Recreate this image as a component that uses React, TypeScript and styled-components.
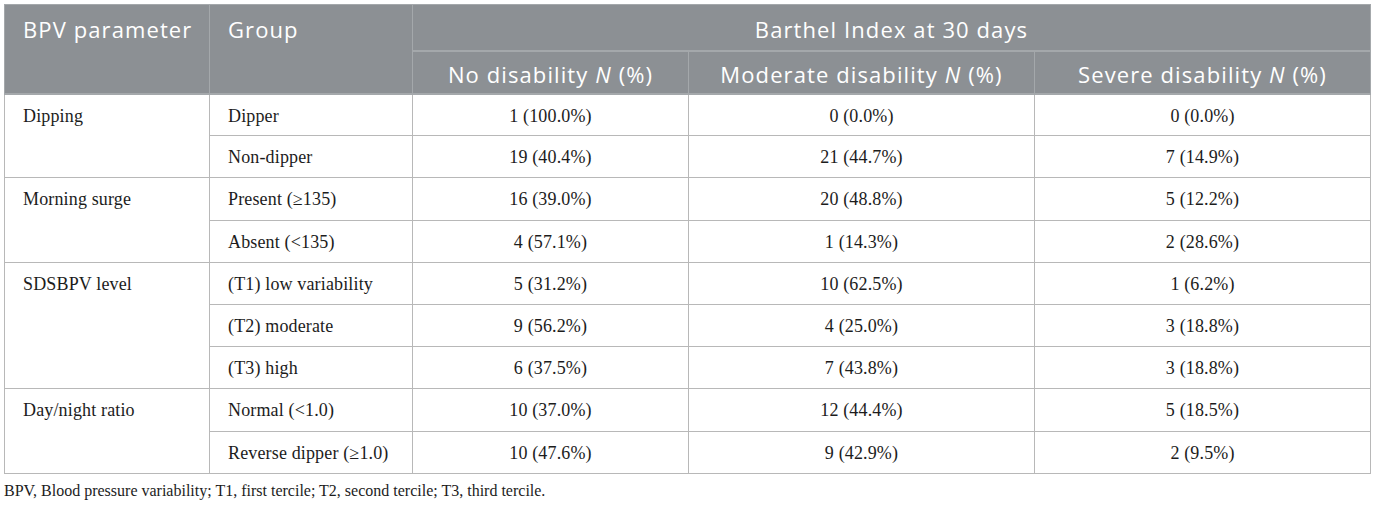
import React from "react";
import styled, { createGlobalStyle } from "styled-components";

const Global = createGlobalStyle`
  html, body { margin: 0; padding: 0; background: #ffffff; }
  body { font-family: "Liberation Serif", "Times New Roman", serif; }
`;

const Page = styled.div`
  padding: 4px 6px 0 4px;
  width: 1366px;
`;

const Table = styled.table`
  border-collapse: collapse;
  width: 1366px;
  table-layout: fixed;
  border: 1px solid #b0b0b0;
`;

const HeadCell = styled.th<{ $align?: "left" | "center"; $h: number }>`
  background: #8c9094;
  color: #ffffff;
  font-family: "Open Sans", "Lato", sans-serif;
  font-weight: 400;
  font-size: 22px;
  letter-spacing: 1.1px;
  line-height: 26px;
  text-align: ${(p) => p.$align ?? "center"};
  vertical-align: top;
  padding: ${(p) => (p.$h - 26) / 2 + 1}px 18px 0 18px;
  height: ${(p) => p.$h}px;
  box-sizing: border-box;
  border: 1px solid #a4a8ab;
  border-bottom: 2px solid #a4a8ab;
  white-space: nowrap;
  em { font-style: italic; }
`;

const Cell = styled.td<{ $align?: "left" | "center" }>`
  font-size: 18px;
  letter-spacing: 0.15px;
  line-height: 22px;
  color: #1c1c1c;
  text-align: ${(p) => p.$align ?? "center"};
  vertical-align: top;
  padding: 10px 18px 0 18px;
  height: 42.2px;
  box-sizing: border-box;
  border: 1px solid #b8b8b8;
  white-space: nowrap;
`;

const Foot = styled.p`
  margin: 7px 0 0 0;
  font-size: 16px;
  line-height: 20px;
  color: #1c1c1c;
`;

type Row = [string, string, string];
type Block = { param: string; rows: { group: string; vals: Row }[] };

const data: Block[] = [
  {
    param: "Dipping",
    rows: [
      { group: "Dipper", vals: ["1 (100.0%)", "0 (0.0%)", "0 (0.0%)"] },
      { group: "Non-dipper", vals: ["19 (40.4%)", "21 (44.7%)", "7 (14.9%)"] },
    ],
  },
  {
    param: "Morning surge",
    rows: [
      { group: "Present (≥135)", vals: ["16 (39.0%)", "20 (48.8%)", "5 (12.2%)"] },
      { group: "Absent (<135)", vals: ["4 (57.1%)", "1 (14.3%)", "2 (28.6%)"] },
    ],
  },
  {
    param: "SDSBPV level",
    rows: [
      { group: "(T1) low variability", vals: ["5 (31.2%)", "10 (62.5%)", "1 (6.2%)"] },
      { group: "(T2) moderate", vals: ["9 (56.2%)", "4 (25.0%)", "3 (18.8%)"] },
      { group: "(T3) high", vals: ["6 (37.5%)", "7 (43.8%)", "3 (18.8%)"] },
    ],
  },
  {
    param: "Day/night ratio",
    rows: [
      { group: "Normal (<1.0)", vals: ["10 (37.0%)", "12 (44.4%)", "5 (18.5%)"] },
      { group: "Reverse dipper (≥1.0)", vals: ["10 (47.6%)", "9 (42.9%)", "2 (9.5%)"] },
    ],
  },
];

export default function App() {
  return (
    <>
      <Global />
      <Page>
        <Table>
          <colgroup>
            <col style={{ width: 205 }} />
            <col style={{ width: 203 }} />
            <col style={{ width: 276 }} />
            <col style={{ width: 346 }} />
            <col style={{ width: 336 }} />
          </colgroup>
          <thead>
            <tr>
              <HeadCell $align="left" $h={46} rowSpan={2}>BPV parameter</HeadCell>
              <HeadCell $align="left" $h={46} rowSpan={2}>Group</HeadCell>
              <HeadCell $h={46} colSpan={3}>Barthel Index at 30 days</HeadCell>
            </tr>
            <tr>
              <HeadCell $h={43}>No disability <em>N</em> (%)</HeadCell>
              <HeadCell $h={43}>Moderate disability <em>N</em> (%)</HeadCell>
              <HeadCell $h={43}>Severe disability <em>N</em> (%)</HeadCell>
            </tr>
          </thead>
          <tbody>
            {data.map((b) =>
              b.rows.map((r, i) => (
                <tr key={b.param + r.group}>
                  {i === 0 && (
                    <Cell $align="left" rowSpan={b.rows.length}>{b.param}</Cell>
                  )}
                  <Cell $align="left">{r.group}</Cell>
                  {r.vals.map((v, j) => (
                    <Cell key={j}>{v}</Cell>
                  ))}
                </tr>
              ))
            )}
          </tbody>
        </Table>
        <Foot>BPV, Blood pressure variability; T1, first tercile; T2, second tercile; T3, third tercile.</Foot>
      </Page>
    </>
  );
}
